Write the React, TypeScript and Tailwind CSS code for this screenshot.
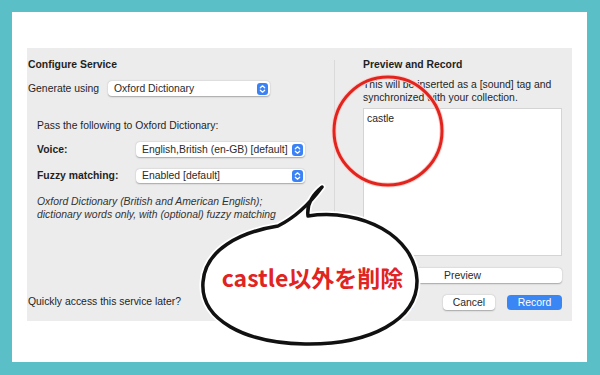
import { ReactNode } from "react"

const font = { fontFamily: '"Liberation Sans", Arial, sans-serif' }

function Stepper() {
  return (
    <svg width="11" height="12" viewBox="0 0 11 12" className="shrink-0">
      <rect x="0" y="0" width="11" height="12" rx="3" fill="#3b82f6" />
      <path d="M3.3 4.8 L5.5 2.8 L7.7 4.8" fill="none" stroke="#fff" strokeWidth="1.2" strokeLinecap="round" strokeLinejoin="round" />
      <path d="M3.3 7.2 L5.5 9.2 L7.7 7.2" fill="none" stroke="#fff" strokeWidth="1.2" strokeLinecap="round" strokeLinejoin="round" />
    </svg>
  )
}

function Popup({ label, className }: { label: string; className: string }) {
  return (
    <div className={"flex items-center bg-white rounded-[4px] shadow-[0_0.5px_1.5px_rgba(0,0,0,0.3)] pl-[6px] pr-[2px] " + className}>
      <span className="flex-1 overflow-hidden whitespace-nowrap text-[#2a2a2a]">{label}</span>
      <Stepper />
    </div>
  )
}

function Btn({ children, blue, className }: { children?: ReactNode; blue?: boolean; className: string }) {
  return (
    <div
      className={
        "h-[15px] rounded-[4px] flex items-center justify-center " +
        (blue
          ? "bg-[#3a86f4] text-white "
          : "bg-white text-[#2a2a2a] shadow-[0_0.5px_1.5px_rgba(0,0,0,0.3)] ") +
        className
      }
    >
      {children}
    </div>
  )
}

const bubble =
  "M 278 226 Q 302 214 322 187 Q 306 200 308 216 C 362 208 415 236 417 280 C 418 320 370 345 305 344 C 245 343 200 320 203 282 C 205 250 240 232 278 226 Z"

export default function App() {
  return (
    <div className="relative w-[600px] h-[375px] bg-[#5bbfc8] pt-[12px] pl-[12px] pr-[13px] pb-[13px] text-[10.4px] leading-[12px] text-[#1f1f1f]" style={font}>
      <div className="bg-white h-full pt-[36px] px-[15px] pb-[41px]">
        <div className="bg-[#ececec] h-full flex">
          {/* left column */}
          <div className="w-[309px] flex flex-col pt-[11px] pl-[1px] pb-[13px]">
            <div className="font-bold">Configure Service</div>
            <div className="flex items-center mt-[10px] h-[15px]">
              <span className="w-[80px]">Generate using</span>
              <Popup label="Oxford Dictionary" className="w-[162px] h-[15px]" />
            </div>
            <div className="pl-[9px] mt-[24px]">Pass the following to Oxford Dictionary:</div>
            <div className="flex items-center pl-[9px] mt-[10px] h-[15px]">
              <span className="w-[99px] font-bold">Voice:</span>
              <Popup label="English,British (en-GB) [default]" className="w-[169px] h-[15px]" />
            </div>
            <div className="flex items-center pl-[9px] mt-[12px] h-[14px]">
              <span className="w-[99px] font-bold">Fuzzy matching:</span>
              <Popup label="Enabled [default]" className="w-[169px] h-[14px]" />
            </div>
            <div className="pl-[9px] mt-[12px] italic text-[#333] leading-[13px]">
              <div>Oxford Dictionary (British and American English);</div>
              <div>dictionary words only, with (optional) fuzzy matching</div>
            </div>
            <div className="mt-auto">Quickly access this service later?</div>
          </div>

          {/* divider */}
          <div className="w-px bg-[#dadada] mt-[12px] mb-[6px]" />

          {/* right column */}
          <div className="flex-1 flex flex-col pt-[11px] pl-[28px] pr-[10px]">
            <div className="font-bold">Preview and Record</div>
            <div className="mt-[7px] leading-[13px] whitespace-nowrap">
              <div>This will be inserted as a [sound] tag and</div>
              <div>synchronized with your collection.</div>
            </div>
            <div className="mt-[4px] h-[148px] bg-white border border-[#d4d4d4] px-[3px] py-[4px]">castle</div>
            <Btn className="mt-[12px] w-full">Preview</Btn>
            <div className="flex mt-[12px] justify-end">
              <Btn blue className="w-[50px] mr-[30px]" />
              <Btn className="w-[52px]">Cancel</Btn>
              <Btn blue className="w-[55px] ml-[12px]">Record</Btn>
            </div>
          </div>
        </div>
      </div>

      {/* annotations */}
      <svg className="absolute left-0 top-0" width="600" height="375" viewBox="0 0 600 375">
        <circle cx="388" cy="131" r="54" fill="none" stroke="#fbd0cc" strokeWidth="5" />
        <circle cx="388" cy="131" r="54" fill="none" stroke="#e2241e" strokeWidth="3" />
        <path d={bubble} fill="#fff" stroke="#fff" strokeWidth="7" strokeLinejoin="round" />
        <path d={bubble} fill="#fff" stroke="#111" strokeWidth="3.5" strokeLinejoin="round" />
        <text
          x="312.5"
          y="287"
          textAnchor="middle"
          fontSize="23"
          fontWeight="700"
          fill="#e0241f"
          fontFamily='"Noto Sans CJK JP", "Noto Sans", sans-serif'
        >
          castle以外を削除
        </text>
      </svg>
    </div>
  )
}
